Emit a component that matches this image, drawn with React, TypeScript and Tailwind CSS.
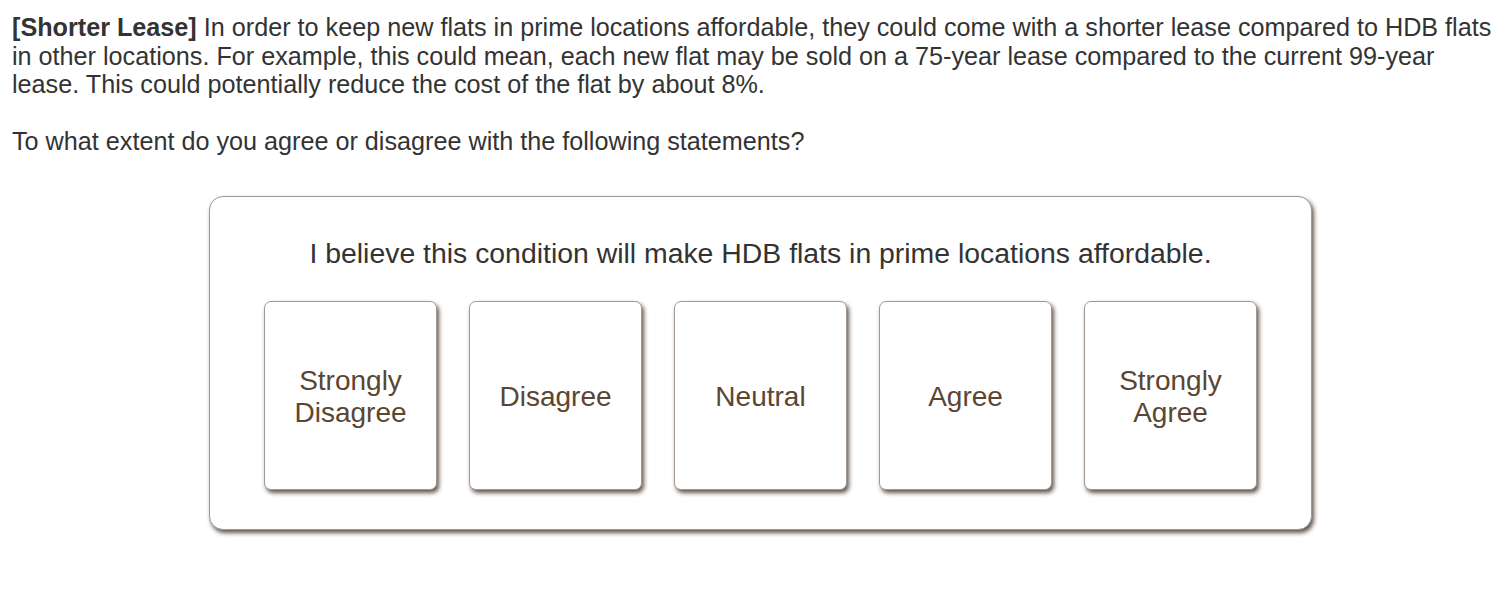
import React, { useState } from 'react';

const OPTIONS = ['Strongly Disagree', 'Disagree', 'Neutral', 'Agree', 'Strongly Agree'];

export default function App() {
  const [selected, setSelected] = useState<string | null>(null);

  return (
    <div className="min-h-screen bg-white font-['Liberation_Sans',Arial,sans-serif]">
      <div className="px-[12px] pt-[13px] text-[25.2px] leading-[28.5px] text-[#333333]">
        <p>
          <b className="font-bold">[Shorter Lease]</b> In order to keep new flats in prime locations affordable, they could come with a shorter lease compared to HDB flats in other locations. For example, this could mean, each new flat may be sold on a 75-year lease compared to the current 99-year lease. This could potentially reduce the cost of the flat by about 8%.
        </p>
        <p className="mt-[28.5px]">To what extent do you agree or disagree with the following statements?</p>
      </div>

      <div className="ml-[209px] mt-[40px] w-[1103px] rounded-[14px] border border-[#a39890] bg-white shadow-[2px_3px_4px_rgba(60,45,35,0.8)]">
        <div className="pt-[40px] text-center text-[28.4px] leading-[32px] text-[#333333]">
          I believe this condition will make HDB flats in prime locations affordable.
        </div>
        <div className="mt-[32px] mb-[39px] flex justify-center gap-[32px]">
          {OPTIONS.map((opt) => (
            <button
              key={opt}
              onClick={() => setSelected(opt)}
              className={`flex h-[189px] w-[173px] items-center justify-center rounded-[7px] border border-[#a39890] px-2 pt-[3px] text-center text-[28px] leading-[32px] text-[#5a4632] shadow-[2px_3px_4px_rgba(60,45,35,0.8)] ${
                selected === opt ? 'bg-[#f3eee9]' : 'bg-white'
              }`}
            >
              {opt}
            </button>
          ))}
        </div>
      </div>
    </div>
  );
}
